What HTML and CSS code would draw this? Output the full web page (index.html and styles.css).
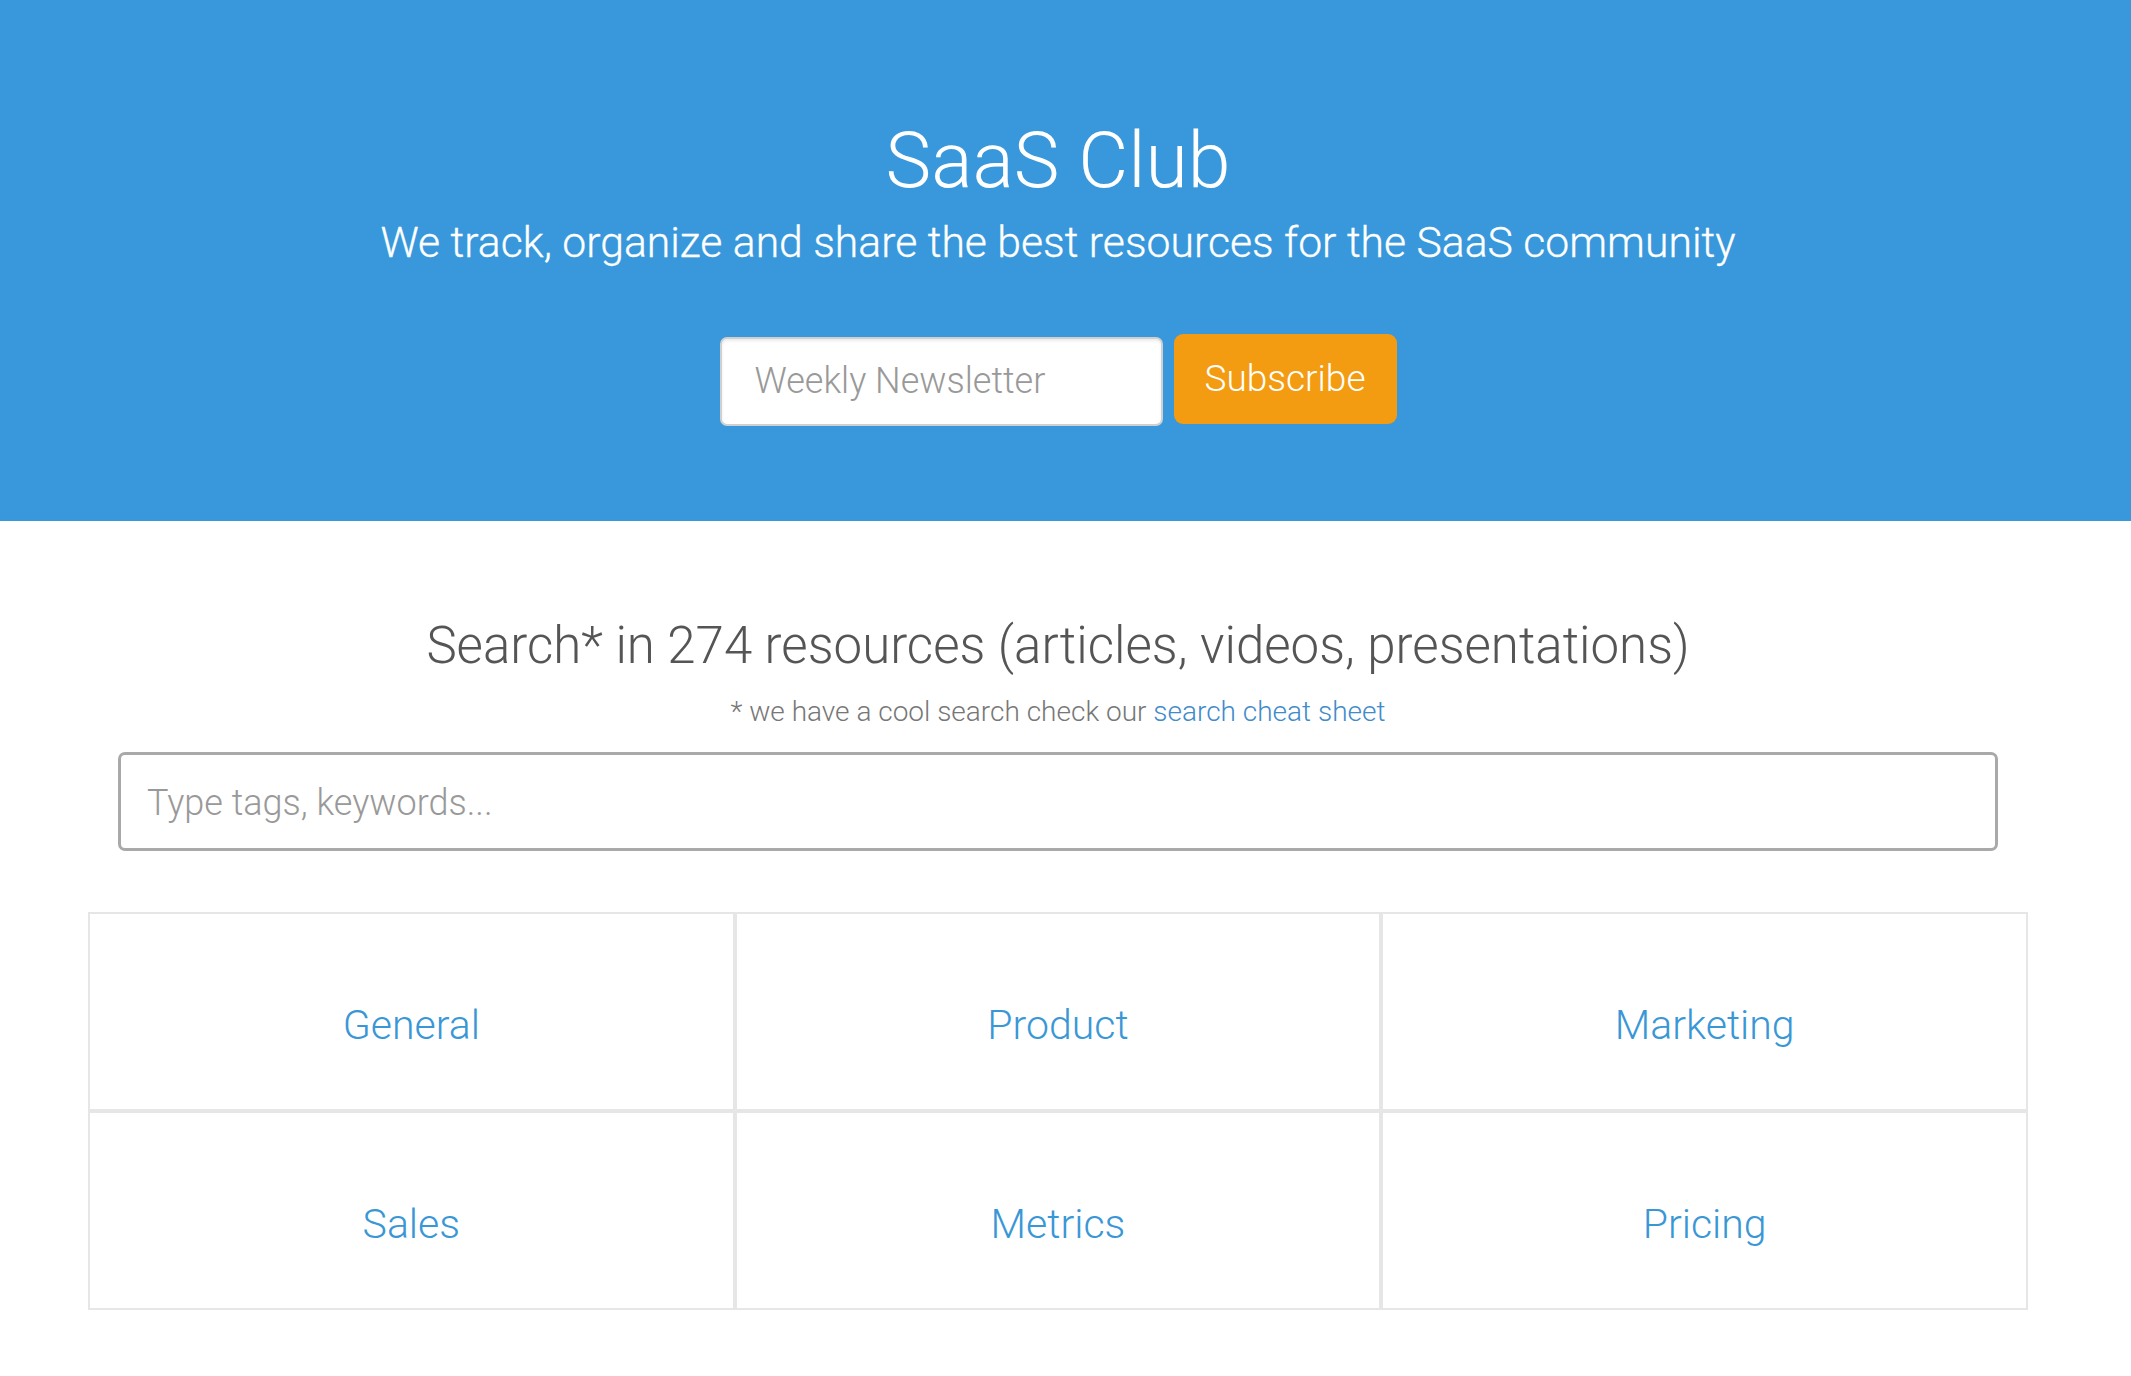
FILE: index.html
```html
<!DOCTYPE html>
<html lang="en">
<head>
<meta charset="utf-8">
<title>SaaS Club</title>
<link rel="stylesheet" href="styles.css">
</head>
<body>
<header class="hero">
  <div class="hero-inner">
    <h1 class="title">SaaS Club</h1>
    <p class="tagline">We track, organize and share the best resources for the SaaS community</p>
    <form class="newsletter">
      <input class="news-input" type="email" placeholder="Weekly Newsletter">
      <button class="news-btn" type="button">Subscribe</button>
    </form>
  </div>
</header>
<main class="main">
  <h2 class="search-title">Search* in 274 resources (articles, videos, presentations)</h2>
  <p class="search-note">* we have a cool search check our <a href="#" class="note-link">search cheat sheet</a></p>
  <div class="search-wrap">
    <input class="search-input" type="text" placeholder="Type tags, keywords...">
  </div>
  <div class="grid">
    <div class="cell"><a href="#" class="cell-link">General</a></div>
    <div class="cell"><a href="#" class="cell-link">Product</a></div>
    <div class="cell"><a href="#" class="cell-link">Marketing</a></div>
    <div class="cell"><a href="#" class="cell-link">Sales</a></div>
    <div class="cell"><a href="#" class="cell-link">Metrics</a></div>
    <div class="cell"><a href="#" class="cell-link">Pricing</a></div>
  </div>
</main>
</body>
</html>
```

FILE: styles.css
```css
* { box-sizing: border-box; }
html, body { margin: 0; padding: 0; }
body {
  font-family: Roboto, "Liberation Sans", Arial, sans-serif;
  background: #ffffff;
  color: #555;
}
.hero {
  background: #3898db;
  height: 521px;
  padding-right: 15px;
}
.hero-inner {
  padding-top: 115px;
  text-align: center;
}
.title {
  margin: 0;
  font-size: 77px;
  font-weight: 300;
  line-height: 1.2;
  color: #fff;
}
.tagline {
  margin: 10px 0 0;
  font-size: 42.7px;
  font-weight: 300;
  line-height: 1.2;
  color: #fff;
  -webkit-text-stroke: 0.3px #fff;
}
.newsletter {
  margin-top: 65px;
  display: flex;
  justify-content: center;
  align-items: flex-start;
  gap: 11px;
}
.news-input {
  margin-top: 3px;
  width: 443px;
  height: 89px;
  border: 2px solid #d0d0d0;
  border-radius: 7px;
  background: #fff;
  box-shadow: inset 0 2px 3px rgba(0,0,0,0.08);
  padding: 0 33px;
  font-family: Roboto, "Liberation Sans", Arial, sans-serif;
  font-size: 36px;
  font-weight: 300;
  color: #555;
  outline: none;
}
.news-input::placeholder { color: #999; }
.news-btn {
  width: 223px;
  height: 90px;
  border: none;
  border-radius: 9px;
  background: #f39c12;
  color: #fff;
  font-family: Roboto, "Liberation Sans", Arial, sans-serif;
  font-size: 37px;
  font-weight: 300;
  padding: 0;
  cursor: pointer;
}
.main {
  padding-right: 15px;
  text-align: center;
}
.search-title {
  margin: 94px 0 0;
  font-size: 51px;
  font-weight: 300;
  line-height: 1.2;
  color: #555;
}
.search-note {
  margin: 19px 0 0;
  font-size: 28px;
  font-weight: 300;
  line-height: 1.2;
  color: #777;
}
.note-link { color: #428bca; text-decoration: none; }
.search-wrap {
  margin: 23px auto 0;
  width: 1880px;
}
.search-input {
  display: block;
  width: 100%;
  height: 99px;
  border: 3px solid #a9a9a9;
  border-radius: 7px;
  padding: 4px 26px 0;
  font-family: Roboto, "Liberation Sans", Arial, sans-serif;
  font-size: 36px;
  font-weight: 300;
  color: #555;
  outline: none;
}
.search-input::placeholder { color: #999; }
.grid {
  margin: 61px auto 0;
  width: 1940px;
  display: grid;
  grid-template-columns: repeat(3, 1fr);
}
.cell {
  height: 199px;
  border: 2px solid #e6e6e6;
  display: flex;
  align-items: center;
  justify-content: center;
  padding-top: 27px;
}
.cell-link {
  font-size: 41px;
  font-weight: 300;
  color: #3a97d6;
  text-decoration: none;
}
```
